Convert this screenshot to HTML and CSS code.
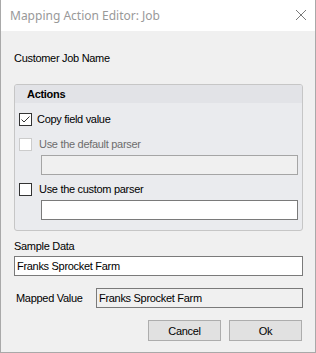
FILE: index.html
```html
<!DOCTYPE html>
<html>
<head>
<meta charset="utf-8">
<link rel="stylesheet" href="styles.css">
</head>
<body>
<div class="window">
  <div class="titlebar">
    <span class="title">Mapping Action Editor: Job</span>
    <svg class="close" width="12" height="12" viewBox="0 0 12 12"><path d="M1 1 L11 11 M11 1 L1 11" stroke="#7a7a7a" stroke-width="1" fill="none"/></svg>
  </div>
  <div class="content">
    <div class="label field-name">Customer Job Name</div>
    <div class="group">
      <div class="group-head">Actions</div>
      <div class="group-body">
        <div class="check-row row-copy">
          <span class="box"><svg width="11" height="11" viewBox="0 0 11 11"><path d="M1.5 5.5 L4 8 L9.5 2.5" stroke="#333" stroke-width="1" fill="none"/></svg></span>
          <span class="check-text">Copy field value</span>
        </div>
        <div class="check-row row-default disabled">
          <span class="box"></span>
          <span class="check-text">Use the default parser</span>
        </div>
        <div class="input inner disabled"></div>
        <div class="check-row row-custom">
          <span class="box"></span>
          <span class="check-text">Use the custom parser</span>
        </div>
        <div class="input inner"></div>
      </div>
    </div>
    <div class="label sample-label">Sample Data</div>
    <div class="input sample">Franks Sprocket Farm</div>
    <div class="mapped-row">
      <span class="mapped-label">Mapped Value</span>
      <div class="input readonly">Franks Sprocket Farm</div>
    </div>
    <div class="buttons">
      <button class="btn">Cancel</button>
      <button class="btn">Ok</button>
    </div>
  </div>
</div>
</body>
</html>
```
FILE: styles.css
```css
* { box-sizing: border-box; }
html, body { margin: 0; padding: 0; background: #f0f0f0; }
.window {
  width: 316px;
  height: 353px;
  background: #f0f0f0;
  border: 1px solid #a9a9a9;
  border-top: none;
  display: flex;
  flex-direction: column;
  font-family: "Liberation Sans", Arial, sans-serif;
  font-size: 11px;
  letter-spacing: -0.3px;
  color: #000;
}
.titlebar {
  height: 31px;
  background: #fff;
  display: flex;
  align-items: flex-start;
  justify-content: space-between;
  padding: 0 8px 0 9px;
  flex-shrink: 0;
}
.title {
  font-family: "Noto Sans", sans-serif;
  font-size: 12px;
  letter-spacing: 0;
  color: #999;
  line-height: 17px;
  margin-top: 7px;
}
.close { margin-top: 9px; }
.content {
  display: flex;
  flex-direction: column;
  padding: 0 12px 0 13px;
}
.label { line-height: 13px; height: 13px; }
.field-name { margin-top: 21px; }
.group {
  margin-top: 19px;
  border: 1px solid #c6c6c6;
  border-radius: 3px;
  background: #eaebee;
  overflow: hidden;
}
.group-head {
  height: 18px;
  line-height: 18px;
  font-weight: bold;
  padding-left: 12px;
  background: #e2e3e7;
}
.group-body {
  display: flex;
  flex-direction: column;
  padding: 10px 4px 10px 4px;
}
.check-row {
  display: flex;
  align-items: center;
  height: 13px;
  line-height: 13px;
}
.box {
  width: 13px;
  height: 13px;
  border: 1px solid #333;
  background: #fff;
  flex-shrink: 0;
  display: flex;
}
.check-text { margin-left: 7px; }
.row-copy .check-text { margin-left: 5px; }
.row-default { margin-top: 12px; }
.row-custom { margin-top: 8px; }
.disabled .box { border-color: #cccccc; background: #fff; }
.disabled .check-text { color: #6d6d6d; }
.input {
  height: 20px;
  border: 1px solid #7a7a7a;
  background: #fff;
  line-height: 18px;
  padding-left: 2px;
}
.inner { margin: 4px 0 0 22px; }
.input.disabled { background: #f0f0f0; border-color: #a5a5a5; }
.sample-label { margin-top: 9px; }
.sample { margin-top: 3px; }
.mapped-row {
  margin-top: 12px;
  display: flex;
  align-items: center;
}
.mapped-label { margin-left: 2px; width: 80px; line-height: 13px; }
.input.readonly { flex: 1; background: #f0f0f0; }
.buttons {
  margin-top: 12px;
  display: flex;
  justify-content: flex-end;
  gap: 8px;
  padding-right: 1px;
}
.btn {
  width: 73px;
  height: 21px;
  background: #e1e1e1;
  border: 1px solid #adadad;
  font-family: inherit;
  font-size: 11px;
  letter-spacing: -0.3px;
  color: #000;
  padding: 0;
  margin: 0;
}
```
